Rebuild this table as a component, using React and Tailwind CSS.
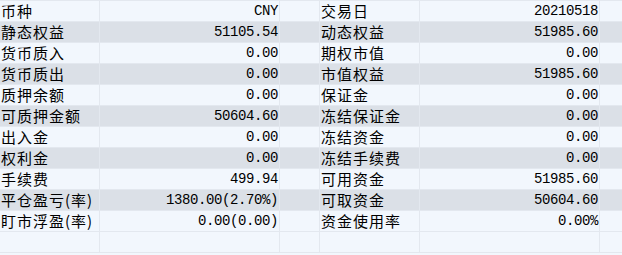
import React from 'react';

const rows = [
  ['币种', 'CNY', '交易日', '20210518'],
  ['静态权益', '51105.54', '动态权益', '51985.60'],
  ['货币质入', '0.00', '期权市值', '0.00'],
  ['货币质出', '0.00', '市值权益', '51985.60'],
  ['质押余额', '0.00', '保证金', '0.00'],
  ['可质押金额', '50604.60', '冻结保证金', '0.00'],
  ['出入金', '0.00', '冻结资金', '0.00'],
  ['权利金', '0.00', '冻结手续费', '0.00'],
  ['手续费', '499.94', '可用资金', '51985.60'],
  ['平仓盈亏(率)', '1380.00(2.70%)', '可取资金', '50604.60'],
  ['盯市浮盈(率)', '0.00(0.00)', '资金使用率', '0.00%'],
  ['', '', '', ''],
];

const label =
  "border-r border-[#e3e8ef] pl-[1px] font-['Noto_Sans_CJK_SC',sans-serif] text-[15px] tracking-[1px] leading-[20px] whitespace-nowrap";
const value =
  "border-r border-[#e3e8ef] pr-[1px] text-right font-['Liberation_Mono','Noto_Sans_CJK_SC',monospace] text-[14px] tracking-[-0.4px] leading-[20px] whitespace-nowrap";

const Row = ({ cells, index }) => {
  const [l1, v1, l2, v2] = cells;
  const striped = index % 2 === 1 && l1;
  return (
    <div
      className={`grid grid-cols-[100px_180px_40px_100px_180px_1fr] h-[21px] border-b border-[#e3e8ef] text-black ${
        striped ? 'bg-[#dbe0e7]' : 'bg-[#f2f7fd]'
      }`}
    >
      <div className={label}>{l1}</div>
      <div className={value}>{v1}</div>
      <div className="border-r border-[#e3e8ef]" />
      <div className={label}>{l2}</div>
      <div className={value}>{v2}</div>
      <div />
    </div>
  );
};

export default function App() {
  return (
    <div className="w-[622px] h-[255px] overflow-hidden bg-[#f2f7fd] border-t border-[#e3e8ef]">
      {rows.map((r, i) => (
        <Row key={i} cells={r} index={i} />
      ))}
    </div>
  );
}
